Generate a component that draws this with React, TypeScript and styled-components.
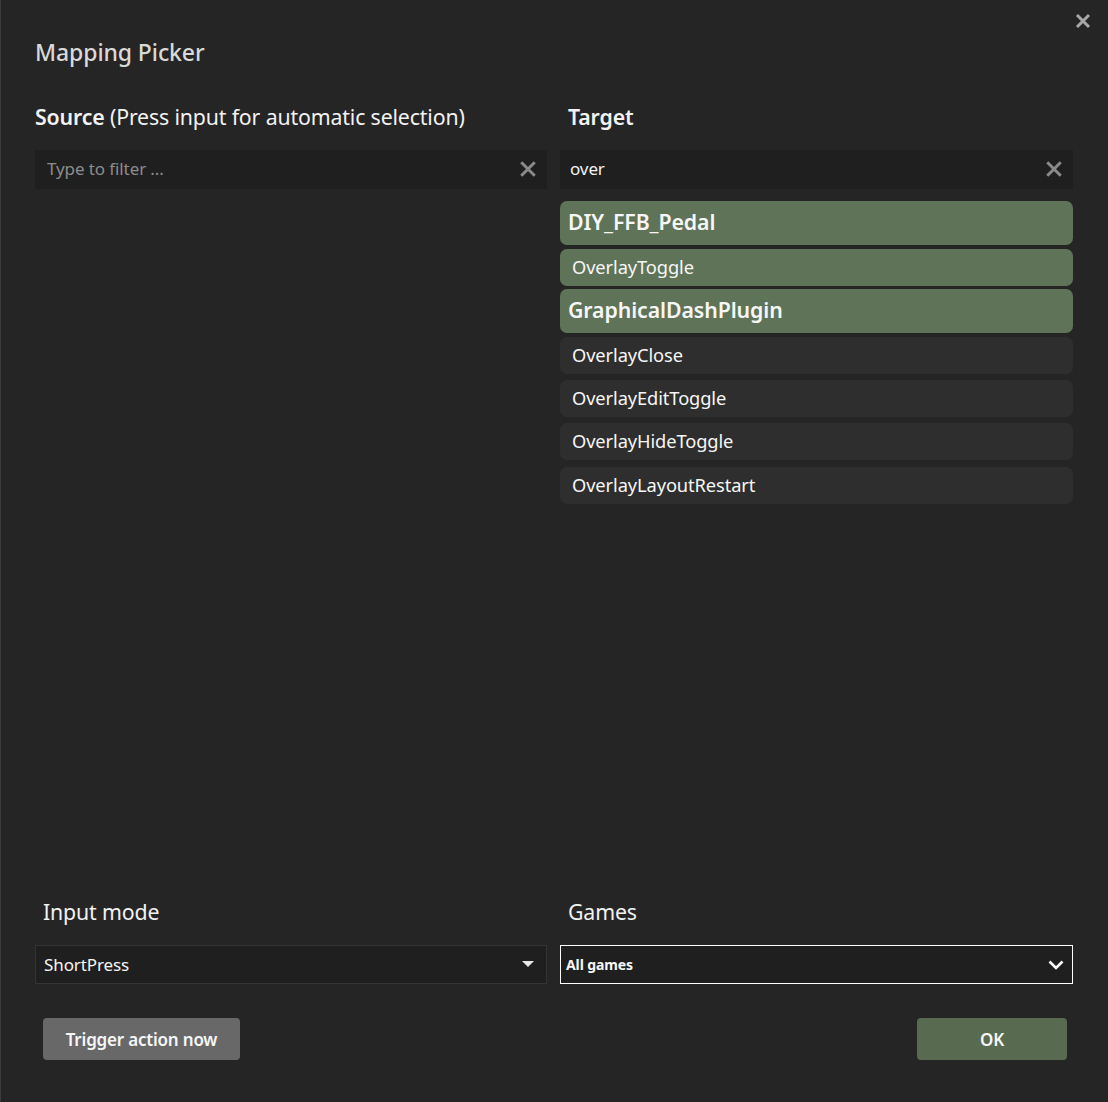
import React from "react";
import styled, { createGlobalStyle } from "styled-components";

const Global = createGlobalStyle`
  html, body { margin: 0; padding: 0; background: #252525; }
  body { font-family: "Noto Sans", "Open Sans", sans-serif; }
  * { box-sizing: border-box; }
`;

const Dialog = styled.div`
  position: relative;
  width: 1108px;
  height: 1102px;
  background: #252525;
  border-left: 1px solid #3c3c3c;
  display: flex;
  flex-direction: column;
  padding: 34px 35px 42px 34px;
  color: #f2f2f2;
`;

const CloseButton = styled.div`
  position: absolute;
  top: 13px;
  right: 17px;
  width: 16px;
  height: 16px;
  display: flex;
  align-items: center;
  justify-content: center;
`;

const Title = styled.h1`
  margin: 0;
  font-size: 23px;
  font-weight: 500;
  color: #d9d9d9;
  line-height: 36px;
  letter-spacing: -0.1px;
`;

const Columns = styled.div`
  display: grid;
  grid-template-columns: 512px 513px;
  column-gap: 13px;
  margin-top: 32px;
  flex: 1;
  min-height: 0;
`;

const Column = styled.div`
  display: flex;
  flex-direction: column;
`;

const Heading = styled.div<{ $indent?: number }>`
  font-size: 21.3px;
  line-height: 30px;
  padding-left: ${(p) => p.$indent ?? 0}px;
  color: #f2f2f2;
  letter-spacing: -0.15px;
  b { font-weight: 600; }
`;

const FilterBox = styled.div`
  margin-top: 18px;
  height: 39px;
  background: #1f1f1f;
  display: flex;
  align-items: center;
  padding: 0 10px 2px 10px;
  font-size: 17px;
`;

const FilterText = styled.span<{ $placeholder?: boolean }>`
  flex: 1;
  color: ${(p) => (p.$placeholder ? "#8c8c8c" : "#f2f2f2")};
  padding-left: ${(p) => (p.$placeholder ? 2 : 0)}px;
  letter-spacing: -0.1px;
`;

const List = styled.div`
  margin-top: 12px;
  display: flex;
  flex-direction: column;
`;

const Item = styled.div<{ $selected?: boolean; $big?: boolean; $gap: number }>`
  margin-top: ${(p) => p.$gap}px;
  height: ${(p) => (p.$big ? 44 : 37)}px;
  border-radius: 7px;
  background: ${(p) => (p.$selected ? "#5e7358" : "#2e2e2e")};
  display: flex;
  align-items: center;
  padding-left: ${(p) => (p.$big ? 8 : 12)}px;
  padding-bottom: ${(p) => (p.$big ? 4 : 3)}px;
  font-size: ${(p) => (p.$big ? 21.3 : 18.3)}px;
  font-weight: ${(p) => (p.$big ? 600 : 400)};
  color: #f6f6f6;
  letter-spacing: -0.1px;
`;

const Bottom = styled.div`
  display: grid;
  grid-template-columns: 512px 513px;
  column-gap: 13px;
`;

const Select = styled.div<{ $focused?: boolean }>`
  margin-top: 18px;
  height: 39px;
  background: #1f1f1f;
  border: 1px solid ${(p) => (p.$focused ? "#ffffff" : "#343434")};
  display: flex;
  align-items: center;
  padding: 0 ${(p) => (p.$focused ? 8 : 12)}px 0 ${(p) => (p.$focused ? 5 : 8)}px;
`;

const SelectText = styled.span<{ $bold?: boolean }>`
  flex: 1;
  font-size: ${(p) => (p.$bold ? 14 : 17)}px;
  font-weight: ${(p) => (p.$bold ? 700 : 400)};
  color: #f6f6f6;
  letter-spacing: -0.1px;
`;

const ButtonRow = styled.div<{ $align: string }>`
  display: flex;
  justify-content: ${(p) => p.$align};
  margin-top: 34px;
  padding: 0 6px 0 8px;
`;

const Button = styled.div<{ $primary?: boolean }>`
  height: 42px;
  width: ${(p) => (p.$primary ? 150 : 197)}px;
  border-radius: 4px;
  background: ${(p) => (p.$primary ? "#586a50" : "#686868")};
  display: flex;
  align-items: center;
  justify-content: center;
  font-size: 17px;
  font-weight: 600;
  color: #f6f6f6;
  letter-spacing: -0.2px;
`;

const XIcon = ({ size, color, w }: { size: number; color: string; w: number }) => (
  <svg width={size} height={size} viewBox="0 0 16 16">
    <path d="M2 2 L14 14 M14 2 L2 14" stroke={color} strokeWidth={w} strokeLinecap="butt" />
  </svg>
);

const items = [
  { name: "DIY_FFB_Pedal", selected: true, big: true, gap: 0 },
  { name: "OverlayToggle", selected: true, big: false, gap: 4 },
  { name: "GraphicalDashPlugin", selected: true, big: true, gap: 3 },
  { name: "OverlayClose", selected: false, big: false, gap: 4 },
  { name: "OverlayEditToggle", selected: false, big: false, gap: 6 },
  { name: "OverlayHideToggle", selected: false, big: false, gap: 6 },
  { name: "OverlayLayoutRestart", selected: false, big: false, gap: 7 },
];

export default function App() {
  return (
    <>
      <Global />
      <Dialog>
        <CloseButton>
          <XIcon size={16} color="#a8a8a8" w={3} />
        </CloseButton>
        <Title>Mapping Picker</Title>
        <Columns>
          <Column>
            <Heading>
              <b>Source</b> (Press input for automatic selection)
            </Heading>
            <FilterBox>
              <FilterText $placeholder>Type to filter ...</FilterText>
              <XIcon size={18} color="#8a8a8a" w={2.6} />
            </FilterBox>
          </Column>
          <Column>
            <Heading $indent={8}>
              <b>Target</b>
            </Heading>
            <FilterBox>
              <FilterText>over</FilterText>
              <XIcon size={18} color="#8a8a8a" w={2.6} />
            </FilterBox>
            <List>
              {items.map((it) => (
                <Item key={it.name} $selected={it.selected} $big={it.big} $gap={it.gap}>
                  {it.name}
                </Item>
              ))}
            </List>
          </Column>
        </Columns>
        <Bottom>
          <Column>
            <Heading $indent={8}>Input mode</Heading>
            <Select>
              <SelectText>ShortPress</SelectText>
              <svg width="12" height="7" viewBox="0 0 12 7">
                <path d="M0 0 L12 0 L6 6 Z" fill="#e8e8e8" />
              </svg>
            </Select>
            <ButtonRow $align="flex-start">
              <Button>Trigger action now</Button>
            </ButtonRow>
          </Column>
          <Column>
            <Heading $indent={8}>Games</Heading>
            <Select $focused>
              <SelectText $bold>All games</SelectText>
              <svg width="16" height="10" viewBox="0 0 16 10">
                <path d="M1.5 1.5 L8 8 L14.5 1.5" stroke="#ffffff" strokeWidth="2.6" fill="none" />
              </svg>
            </Select>
            <ButtonRow $align="flex-end">
              <Button $primary>OK</Button>
            </ButtonRow>
          </Column>
        </Bottom>
      </Dialog>
    </>
  );
}
